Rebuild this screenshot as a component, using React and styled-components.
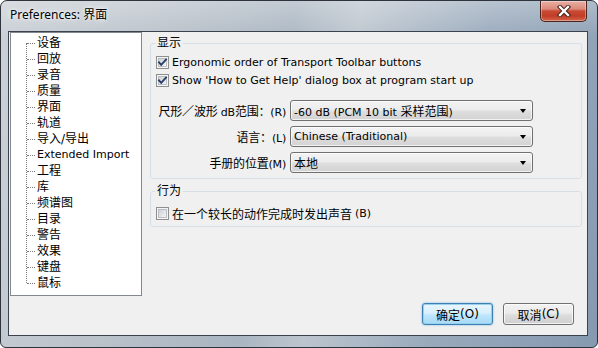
import React from 'react';
import styled, { createGlobalStyle } from 'styled-components';

const Global = createGlobalStyle`
  html, body { margin: 0; padding: 0; background: #ffffff; }
  body { font-family: "DejaVu Sans", "Noto Sans CJK SC", sans-serif; font-size: 11px; color: #000; }
  * { box-sizing: border-box; }
`;

const Window = styled.div`
  width: 598px;
  height: 348px;
  border: 1px solid #2f343c;
  border-radius: 7px 7px 6px 6px;
  overflow: hidden;
  display: flex;
  flex-direction: column;
  background:
    linear-gradient(180deg, rgba(255,255,255,0.3) 0%, rgba(255,255,255,0.05) 10%, rgba(255,255,255,0) 100%),
    linear-gradient(100deg, #c9cfd5 0%, #b9c1c9 25%, #a9b5c1 45%, #bcc5ce 55%, #98a9bb 75%, #8599b0 100%);
`;

const TitleBar = styled.div`
  height: 30px;
  display: flex;
  align-items: flex-start;
  flex-shrink: 0;
`;

const Title = styled.div`
  font-family: "Noto Sans", "Noto Sans CJK SC", sans-serif;
  font-size: 12px;
  line-height: 16px;
  padding: 6px 0 0 9px;
  color: #000;
  text-shadow: 0 0 6px rgba(255,255,255,0.9), 0 0 3px rgba(255,255,255,0.9);
`;

const CloseButton = styled.div`
  margin-left: auto;
  margin-right: 10px;
  width: 47px;
  height: 21px;
  border: 1px solid #4a2420;
  border-top: none;
  border-radius: 0 0 5px 5px;
  background: linear-gradient(180deg, #e8b0a4 0%, #dc8a7a 40%, #c84a34 50%, #c23d26 75%, #d2664c 100%);
  box-shadow: inset 0 0 0 1px rgba(255,255,255,0.35);
  display: flex;
  align-items: center;
  justify-content: center;
`;

const Client = styled.div`
  margin: 0 9px 0 7px;
  height: 305px;
  border: 1px solid #3a424d;
  background: #f0f0f0;
  display: flex;
  flex-direction: column;
`;

const Main = styled.div`
  display: flex;
  padding: 0 1px 0 1px;
  gap: 4px;
`;

const Tree = styled.div`
  width: 132px;
  height: 264px;
  border: 1px solid #828790;
  background: #ffffff;
  padding-top: 2px;
`;

const TreeLines = styled.div`
  position: relative;
  &::before {
    content: "";
    position: absolute;
    left: 15px;
    top: 8px;
    bottom: 8px;
    border-left: 1px dotted #7a7a7a;
  }
`;

const TreeItem = styled.div`
  position: relative;
  height: 16px;
  line-height: 16px;
  padding-left: 26px;
  font-size: ${p => (p.$latin ? '11px' : '12px')};
  white-space: nowrap;
  &::before {
    content: "";
    position: absolute;
    left: 16px;
    top: 8px;
    width: 8px;
    border-top: 1px dotted #7a7a7a;
  }
`;

const Panel = styled.div`
  flex: 1;
  padding: 5px 4px 0 4px;
  display: flex;
  flex-direction: column;
  gap: 6px;
`;

const Group = styled.fieldset`
  margin: 0;
  border: 1px solid #d5dfe5;
  border-radius: 3px;
  padding: ${p => p.$pad};
  min-width: 0;
  display: flex;
  flex-direction: column;
`;

const Legend = styled.legend`
  font-size: 12px;
  line-height: 12px;
  padding: 0 2px;
  margin-left: -1px;
`;

const CheckRow = styled.label`
  height: 18px;
  display: flex;
  align-items: center;
  gap: 3px;
  white-space: nowrap;
`;

const Han = styled.span`
  font-size: 12px;
`;

const ComboGrid = styled.div`
  display: grid;
  grid-template-columns: 130px 243px;
  column-gap: 4px;
  row-gap: 5px;
  margin-top: 11px;
  align-items: center;
`;

const FieldLabel = styled.div`
  text-align: right;
  white-space: nowrap;
  letter-spacing: -0.2px;
`;

const Combo = styled.div`
  height: 21px;
  border: 1px solid #707070;
  border-radius: 3px;
  background: linear-gradient(180deg, #f3f3f3 0%, #ececec 45%, #dedede 55%, #d2d2d2 100%);
  box-shadow: inset 0 0 0 1px rgba(255,255,255,0.7);
  display: flex;
  align-items: center;
  padding: 0 6px 0 3px;
  white-space: nowrap;
`;

const ComboText = styled.span`
  flex: 1;
  overflow: hidden;
`;

const Arrow = styled.span`
  width: 0;
  height: 0;
  border-left: 3.5px solid transparent;
  border-right: 3.5px solid transparent;
  border-top: 4px solid #000;
  margin-top: 1px;
`;

const Footer = styled.div`
  display: flex;
  justify-content: flex-end;
  gap: 10px;
  padding: 7px 13px 0 0;
`;

const Button = styled.div`
  width: 71px;
  height: 22px;
  border-radius: 3px;
  display: flex;
  align-items: center;
  justify-content: center;
  font-size: 12px;
  border: 1px solid ${p => (p.$default ? '#3c7fb1' : '#707070')};
  background: ${p =>
    p.$default
      ? 'linear-gradient(180deg, #eaf6fd 0%, #d9f0fc 45%, #bee6fd 55%, #a7d9f5 100%)'
      : 'linear-gradient(180deg, #f2f2f2 0%, #ebebeb 45%, #dddddd 55%, #cfcfcf 100%)'};
  box-shadow: ${p =>
    p.$default
      ? 'inset 0 0 0 1px #98d1ef, 0 0 2px #5fb2e6'
      : 'inset 0 0 0 1px rgba(255,255,255,0.75)'};
`;

function CheckBox({ checked }) {
  const id = checked ? 'cbg1' : 'cbg0';
  return (
    <svg width="13" height="13" viewBox="0 0 13 13">
      <defs>
        <linearGradient id={id} x1="0" y1="0" x2="1" y2="1">
          <stop offset="0" stopColor="#cbcfd5" />
          <stop offset="1" stopColor="#f6f6f6" />
        </linearGradient>
      </defs>
      <rect x="0.5" y="0.5" width="12" height="12" fill="#f4f4f4" stroke="#8e8f8f" />
      <rect x="2.5" y="2.5" width="8" height="8" fill={`url(#${id})`} stroke="#b0b4ba" strokeWidth="0.8" />
      {checked && (
        <path d="M3 6.4 L5.2 8.8 L10 3.6" fill="none" stroke="#2a3d66" strokeWidth="1.9" strokeLinecap="square" />
      )}
    </svg>
  );
}

function CloseGlyph() {
  return (
    <svg width="14" height="12" viewBox="0 0 14 12">
      <path d="M3 2 L11 10 M11 2 L3 10" stroke="#3a1a16" strokeWidth="4.2" strokeLinecap="square" />
      <path d="M3 2 L11 10 M11 2 L3 10" stroke="#ffffff" strokeWidth="2.4" strokeLinecap="square" />
    </svg>
  );
}

const treeItems = [
  '设备', '回放', '录音', '质量', '界面', '轨道', '导入/导出', 'Extended Import',
  '工程', '库', '频谱图', '目录', '警告', '效果', '键盘', '鼠标',
];

export default function App() {
  return (
    <>
      <Global />
      <Window>
        <TitleBar>
          <Title>Preferences: 界面</Title>
          <CloseButton>
            <CloseGlyph />
          </CloseButton>
        </TitleBar>
        <Client>
          <Main>
            <Tree>
              <TreeLines>
                {treeItems.map(t => (
                  <TreeItem key={t} $latin={t === 'Extended Import'}>{t}</TreeItem>
                ))}
              </TreeLines>
            </Tree>
            <Panel>
              <Group $pad="4px 6px 5px 5px">
                <Legend>显示</Legend>
                <CheckRow>
                  <CheckBox checked />
                  Ergonomic order of Transport Toolbar buttons
                </CheckRow>
                <CheckRow>
                  <CheckBox checked />
                  Show 'How to Get Help' dialog box at program start up
                </CheckRow>
                <ComboGrid>
                  <FieldLabel><Han>尺形／波形</Han> dB<Han>范围：</Han>(R)</FieldLabel>
                  <Combo>
                    <ComboText>-60 dB (PCM 10 bit <Han>采样范围</Han>)</ComboText>
                    <Arrow />
                  </Combo>
                  <FieldLabel><Han>语言：</Han>(L)</FieldLabel>
                  <Combo>
                    <ComboText>Chinese (Traditional)</ComboText>
                    <Arrow />
                  </Combo>
                  <FieldLabel><Han>手册的位置</Han>(M)</FieldLabel>
                  <Combo>
                    <ComboText><Han>本地</Han></ComboText>
                    <Arrow />
                  </Combo>
                </ComboGrid>
              </Group>
              <Group $pad="7px 6px 4px 5px">
                <Legend>行为</Legend>
                <CheckRow>
                  <CheckBox />
                  <Han>在一个较长的动作完成时发出声音</Han>(B)
                </CheckRow>
              </Group>
            </Panel>
          </Main>
          <Footer>
            <Button $default><Han>确定</Han>(O)</Button>
            <Button><Han>取消</Han>(C)</Button>
          </Footer>
        </Client>
      </Window>
    </>
  );
}
